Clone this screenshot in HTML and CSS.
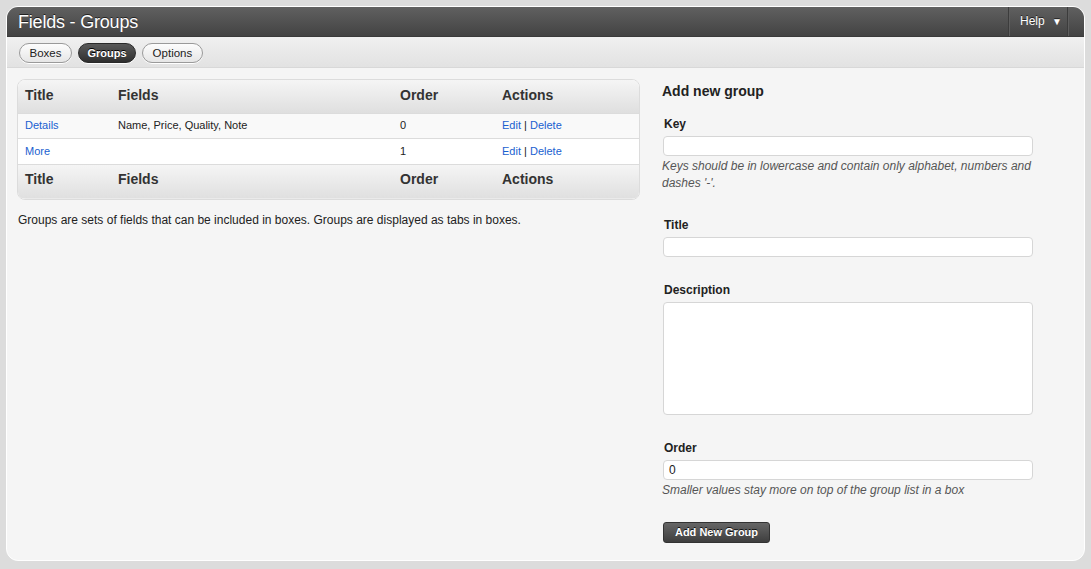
FILE: index.html
```html
<!DOCTYPE html>
<html>
<head>
<meta charset="utf-8">
<title>Fields - Groups</title>
<link rel="stylesheet" href="styles.css">
</head>
<body>
<div class="panel">
  <div class="topbar">
    <h1 class="title">Fields - Groups</h1>
    <div class="help">Help <span class="caret">&#9660;</span></div>
  </div>
  <div class="subnav">
    <a class="pill">Boxes</a>
    <a class="pill active">Groups</a>
    <a class="pill">Options</a>
  </div>
  <div class="content">
    <div class="left">
      <div class="tablebox">
        <table class="grid">
          <thead>
            <tr><th class="c1">Title</th><th class="c2">Fields</th><th class="c3">Order</th><th class="c4">Actions</th></tr>
          </thead>
          <tbody>
            <tr class="odd"><td><a>Details</a></td><td>Name, Price, Quality, Note</td><td>0</td><td><a>Edit</a> | <a>Delete</a></td></tr>
            <tr class="even"><td><a>More</a></td><td></td><td>1</td><td><a>Edit</a> | <a>Delete</a></td></tr>
          </tbody>
          <tfoot>
            <tr><th>Title</th><th>Fields</th><th>Order</th><th>Actions</th></tr>
          </tfoot>
        </table>
      </div>
      <p class="note">Groups are sets of fields that can be included in boxes. Groups are displayed as tabs in boxes.</p>
    </div>
    <div class="right">
      <h3 class="formtitle">Add new group</h3>
      <div class="group first">
        <label class="lbl">Key</label>
        <div class="input"></div>
        <p class="hint">Keys should be in lowercase and contain only alphabet, numbers and dashes '-'.</p>
      </div>
      <div class="group">
        <label class="lbl">Title</label>
        <div class="input"></div>
      </div>
      <div class="group">
        <label class="lbl">Description</label>
        <div class="input textarea"></div>
      </div>
      <div class="group last">
        <label class="lbl">Order</label>
        <div class="input">0</div>
        <p class="hint">Smaller values stay more on top of the group list in a box</p>
      </div>
      <div class="actions"><span class="btn">Add New Group</span></div>
    </div>
  </div>
</div>
</body>
</html>
```

FILE: styles.css
```css
* { box-sizing: border-box; }
html, body { margin: 0; padding: 0; }
body {
  background: #dcdcdc;
  font-family: "Liberation Sans", Arial, Helvetica, sans-serif;
  color: #222;
  padding: 6px;
  width: 1091px;
  height: 569px;
  overflow: hidden;
}
.panel {
  width: 1079px;
  height: 555px;
  background: #f5f5f5;
  border: 1px solid #fff;
  border-radius: 12px;
  overflow: hidden;
  display: flex;
  flex-direction: column;
}
.topbar {
  height: 30px;
  background: linear-gradient(#606060, #434343);
  display: flex;
  align-items: stretch;
  justify-content: space-between;
  padding-left: 11px;
  padding-right: 16px;
  border-bottom: 1px solid #3a3a3a;
}
.title {
  margin: 0;
  font-size: 18px;
  font-weight: normal;
  color: #fff;
  line-height: 30px;
  text-shadow: 0 -1px 0 #222;
  letter-spacing: -0.2px;
}
.help {
  width: 60px;
  border-left: 1px solid #3c3c3c;
  border-right: 1px solid #3c3c3c;
  box-shadow: inset 1px 0 0 #5e5e5e, 1px 0 0 #5e5e5e;
  color: #fff;
  font-size: 12px;
  line-height: 29px;
  padding-left: 11px;
  text-shadow: 0 -1px 0 #222;
}
.caret { font-size: 10px; margin-left: 4px; }
.subnav {
  height: 31px;
  background: linear-gradient(#f0f0f0, #e2e2e2);
  border-bottom: 1px solid #d8d8d8;
  display: flex;
  align-items: center;
  gap: 6px;
  padding-left: 12px;
  padding-top: 1px;
}
.pill {
  height: 20px;
  line-height: 18px;
  padding: 0 9.5px;
  font-size: 11.5px;
  color: #222;
  border: 1px solid #9a9a9a;
  border-radius: 10px;
  background: linear-gradient(#fdfdfd, #e6e6e6);
  box-shadow: 0 1px 0 #fff;
}
.pill.active {
  color: #fff;
  font-weight: bold;
  font-size: 11px;
  padding: 0 8.5px;
  background: linear-gradient(#5a5a5a, #2f2f2f);
  border-color: #2a2a2a;
  text-shadow: 0 -1px 0 #000;
}
.content {
  flex: 1;
  display: flex;
  gap: 22px;
  padding: 11px 0 0 10px;
}
.left { width: 623px; }
.tablebox {
  border: 1px solid #dcdcdc;
  border-radius: 8px;
  overflow: hidden;
  background: #fff;
}
.grid {
  width: 100%;
  border-collapse: collapse;
  font-size: 11px;
}
.grid th {
  text-align: left;
  font-size: 14px;
  color: #333;
  font-weight: bold;
  padding: 0 0 2px 7px;
  background: linear-gradient(#f5f5f5, #dfdfdf);
}
.grid thead tr { height: 33px; }
.grid tfoot tr { height: 35px; }
.grid tfoot th { border-top: 1px solid #dcdcdc; padding-bottom: 6px; }
.grid .c1 { width: 93px; }
.grid .c2 { width: 282px; }
.grid .c3 { width: 102px; }
.grid td {
  padding: 0 0 1px 7px;
  border-top: 1px solid #dcdcdc;
  color: #222;
}
.grid tr.odd { height: 25px; }
.grid tr.even { height: 26px; }
.grid tr.odd td { background: #f9f9f9; }
.grid a { color: #1a5fd0; text-decoration: none; }
.note {
  font-size: 12px;
  margin: 13px 0 0 1px;
  line-height: 15px;
}
.right { width: 372px; }
.formtitle {
  margin: 3px 0 0 0;
  font-size: 14px;
  line-height: 18px;
  color: #222;
  font-weight: bold;
}
.group {
  display: flex;
  flex-direction: column;
  margin-bottom: 25px;
}
.group.first { margin-top: 16px; }
.group.last { margin-bottom: 23px; }
.lbl {
  font-size: 12px;
  font-weight: bold;
  line-height: 16px;
  padding-left: 2px;
  margin-bottom: 4px;
}
.input {
  width: 370px;
  height: 20px;
  margin-left: 1px;
  background: #fff;
  border: 1px solid #d6d6d6;
  border-radius: 4px;
  font-size: 12px;
  line-height: 18px;
  padding-left: 5px;
}
.input.textarea { height: 113px; }
.hint {
  margin: 2px 0 0 0;
  font-size: 12px;
  line-height: 17px;
  font-style: italic;
  color: #555;
  width: 372px;
}
.actions { padding-left: 1px; }
.btn {
  display: inline-block;
  width: 107px;
  height: 21px;
  line-height: 19px;
  text-align: center;
  font-size: 11px;
  font-weight: bold;
  color: #fff;
  border: 1px solid #333;
  border-radius: 3px;
  background: linear-gradient(#666, #3e3e3e);
  text-shadow: 0 -1px 0 #111;
}
```
